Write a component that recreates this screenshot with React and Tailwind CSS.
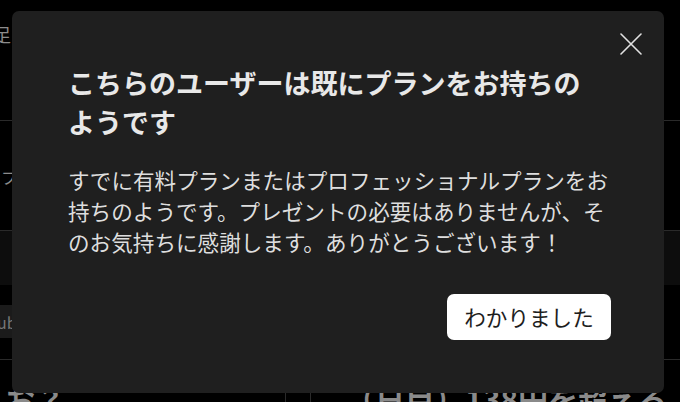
import React from "react";

export default function App() {
  return (
    <div className="relative w-[680px] h-[402px] overflow-hidden bg-black font-['Noto_Sans_CJK_JP','Noto_Sans',sans-serif]">
      {/* dimmed page behind the dialog */}
      <div className="flex flex-col">
        <div className="h-[121px] border-b border-[#2a2a2a] pt-[21px]">
          <span className="block -ml-[7px] text-[18px] leading-[26px] text-[#8c8c8c]">足(</span>
        </div>
        <div className="h-[110px] border-b border-[#2a2a2a] pt-[44px]">
          <span className="block ml-[1px] text-[16px] leading-[24px] text-[#8c8c8c]">フ</span>
        </div>
        <div className="h-[54px] bg-[#0d0d0d]" />
        <div className="h-[75px] border-b border-[#2a2a2a] pt-[20px]">
          <div className="w-[40px] h-[33px] bg-[#1b1b1b] flex items-center">
            <span className="-ml-[3px] text-[16px] leading-[24px] text-[#777]">ub</span>
          </div>
        </div>
        <div className="flex h-[42px] items-start font-bold text-[30px] leading-[44px] text-[#8a8a8a]">
          <span className="ml-[5px] w-[280px] pt-[16px]">お？</span>
          <div className="h-[42px] border-l border-[#2a2a2a] w-[25px]" />
          <div className="h-[42px] border-l border-[#2a2a2a] w-[35px]" />
          <span className="whitespace-nowrap pt-[16px]">（日目）138円を超える</span>
        </div>
      </div>

      {/* modal dialog */}
      <div className="absolute left-[12px] top-[11px] w-[652px] h-[382px] rounded-[7px] bg-[#1f1f1f] pl-[56px] pr-[53px] pt-[53px] flex flex-col">
        <button className="absolute top-[22px] right-[22px] w-[22px] h-[22px]" aria-label="close">
          <svg width="22" height="22" viewBox="0 0 22 22" fill="none" stroke="#e2e2e2" strokeWidth="1.6" strokeLinecap="round">
            <path d="M1 1 L21 21 M21 1 L1 21" />
          </svg>
        </button>
        <h2 className="text-[27px] leading-[38.5px] font-bold text-[#e8e8e8] whitespace-nowrap">
          こちらのユーザーは既にプランをお持ちの
          <br />
          ようです
        </h2>
        <p className="mt-[23px] text-[21.6px] leading-[31px] text-[#dedede] whitespace-nowrap">
          すでに有料プランまたはプロフェッショナルプランをお
          <br />
          持ちのようです。プレゼントの必要はありませんが、そ
          <br />
          のお気持ちに感謝します。ありがとうございます！
        </p>
        <div className="mt-[37px] flex justify-end">
          <button className="w-[164px] h-[46px] rounded-[7px] bg-white text-[21.6px] leading-[30px] text-[#1e1e1e]">
            わかりました
          </button>
        </div>
      </div>
    </div>
  );
}
